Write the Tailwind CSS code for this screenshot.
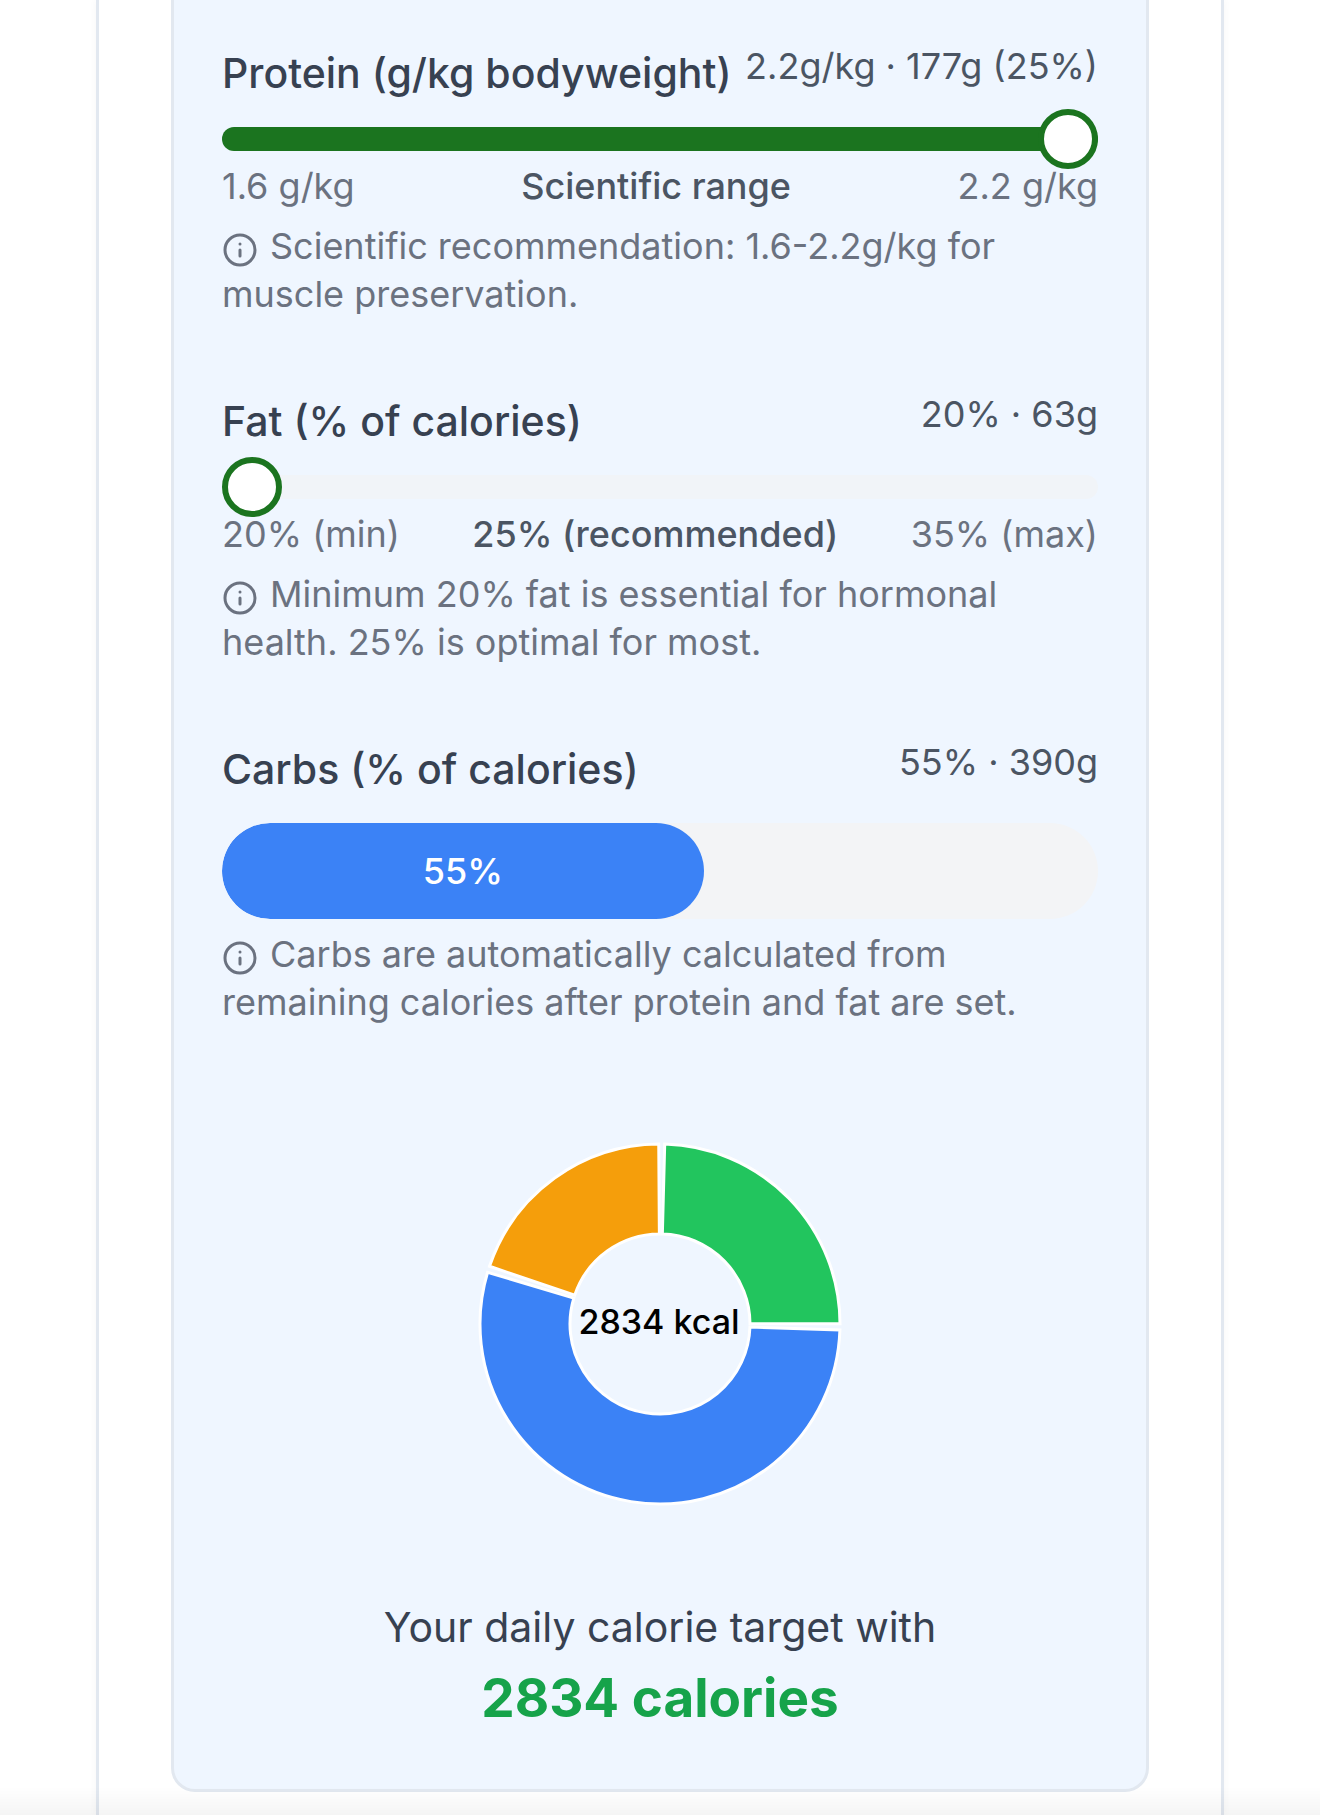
<!DOCTYPE html>
<html lang="en">
<head>
<meta charset="utf-8">
<meta name="viewport" content="width=device-width, initial-scale=1">
<title>Macro targets</title>
<script src="https://cdn.jsdelivr.net/npm/@tailwindcss/browser@4"></script>
</head>
<body class="min-h-screen bg-white font-['Inter',sans-serif] text-[#374151]">
<svg class="hidden" aria-hidden="true">
  <symbol id="info" viewBox="0 0 24 24" fill="none" stroke="currentColor" stroke-width="2" stroke-linecap="round" stroke-linejoin="round">
    <circle cx="12" cy="12" r="10"/><path d="M12 16v-4M12 8h.01"/>
  </symbol>
</svg>

<main class="mx-24 border-x-[3px] border-[#e2e8f0] px-[72px] pb-6 shadow-[0_0_8px_rgba(0,0,0,0.04)]">
  <div class="rounded-b-3xl border-x-[3px] border-b-[3px] border-[#e2e8f0] bg-[#eff6ff] px-12 pt-[42px] pb-[54px]">
    <div class="flex flex-col gap-[72px] text-[36px] leading-[48px]">

      <section>
        <div class="flex items-start justify-between">
          <label for="protein" class="text-[41px] leading-[62px] font-medium whitespace-nowrap">Protein (g/kg bodyweight)</label>
          <output for="protein" class="whitespace-nowrap text-[#4b5563]">2.2g/kg · 177g (25%)</output>
        </div>
        <input id="protein" type="range" min="1.6" max="2.2" step="0.1" value="2.2" class="mt-[23px] block h-6 w-full appearance-none rounded-xl bg-[#1b741f] [&::-webkit-slider-thumb]:size-[60px] [&::-webkit-slider-thumb]:appearance-none [&::-webkit-slider-thumb]:rounded-full [&::-webkit-slider-thumb]:border-[6px] [&::-webkit-slider-thumb]:border-[#1b741f] [&::-webkit-slider-thumb]:bg-white">
        <div class="mt-[11px] flex justify-between text-[#6b7280]">
          <span>1.6 g/kg</span>
          <span class="font-medium text-[#4b5563]">Scientific range</span>
          <span>2.2 g/kg</span>
        </div>
        <p class="mt-3 text-[#6b7280]"><svg class="mr-3 inline size-9 align-[-9px]" aria-hidden="true"><use href="#info"/></svg>Scientific recommendation: 1.6-2.2g/kg for muscle preservation.</p>
      </section>

      <section>
        <div class="flex items-start justify-between">
          <label for="fat" class="text-[41px] leading-[62px] font-medium whitespace-nowrap">Fat (% of calories)</label>
          <output for="fat" class="whitespace-nowrap text-[#4b5563]">20% · 63g</output>
        </div>
        <input id="fat" type="range" min="20" max="35" value="20" class="mt-[23px] block h-6 w-full appearance-none rounded-xl bg-[#f1f4f8] [&::-webkit-slider-thumb]:size-[60px] [&::-webkit-slider-thumb]:appearance-none [&::-webkit-slider-thumb]:rounded-full [&::-webkit-slider-thumb]:border-[6px] [&::-webkit-slider-thumb]:border-[#1b741f] [&::-webkit-slider-thumb]:bg-white">
        <div class="mt-[11px] flex justify-between text-[#6b7280]">
          <span>20% (min)</span>
          <span class="font-medium text-[#4b5563]">25% (recommended)</span>
          <span>35% (max)</span>
        </div>
        <p class="mt-3 text-[#6b7280]"><svg class="mr-3 inline size-9 align-[-9px]" aria-hidden="true"><use href="#info"/></svg>Minimum 20% fat is essential for hormonal health. 25% is optimal for most.</p>
      </section>

      <section>
        <div class="flex items-start justify-between">
          <h3 id="carbs" class="text-[41px] leading-[62px] font-medium whitespace-nowrap">Carbs (% of calories)</h3>
          <span class="whitespace-nowrap text-[#4b5563]">55% · 390g</span>
        </div>
        <div role="progressbar" aria-labelledby="carbs" aria-valuenow="55" aria-valuemin="0" aria-valuemax="100" class="mt-[23px] h-24 overflow-hidden rounded-full bg-[#f3f4f6]">
          <div class="flex h-full items-center justify-center rounded-full bg-[#3b82f6] font-medium text-white" style="width:55%">55%</div>
        </div>
        <p class="mt-[11px] text-[#6b7280]"><svg class="mr-3 inline size-9 align-[-9px]" aria-hidden="true"><use href="#info"/></svg>Carbs are automatically calculated from remaining calories after protein and fat are set.</p>
      </section>
    </div>

    <svg id="chart" class="mx-auto mt-[98px] block size-[400px]" viewBox="-200 -200 400 400" role="img" aria-label="Protein 25%, carbs 55%, fat 20%">
      <g id="slices" stroke="#fff" stroke-width="3"></g>
      <text x="-1" y="10" text-anchor="middle" class="text-[34px] font-medium">2834 kcal</text>
    </svg>

    <div class="mt-[73px] text-center">
      <p class="text-[41px] leading-[60px]">Your daily calorie target with</p>
      <p class="mt-1 text-[53px] leading-[74px] font-bold text-[#16a34a]">2834 calories</p>
    </div>
  </div>
</main>
<div class="pointer-events-none fixed inset-x-0 bottom-0 h-7 bg-linear-to-b from-transparent to-black/4"></div>

<script>
  // Donut slices: start and end in degrees clockwise from the top
  const slices = [[1.5, 89.9, '#22c55e'], [91.9, 286.7, '#3b82f6'], [288.7, 359.6, '#f59e0b']];
  const pt = (r, a) => { const t = a * Math.PI / 180; return (r * Math.sin(t)).toFixed(2) + ' ' + (-r * Math.cos(t)).toFixed(2); };
  document.getElementById('slices').innerHTML = slices.map(([a, b, color]) => {
    const large = b - a > 180 ? 1 : 0;
    return `<path fill="${color}" d="M${pt(180, a)}A180 180 0 ${large} 1 ${pt(180, b)}L${pt(90, b)}A90 90 0 ${large} 0 ${pt(90, a)}Z"/>`;
  }).join('');
</script>
</body>
</html>
